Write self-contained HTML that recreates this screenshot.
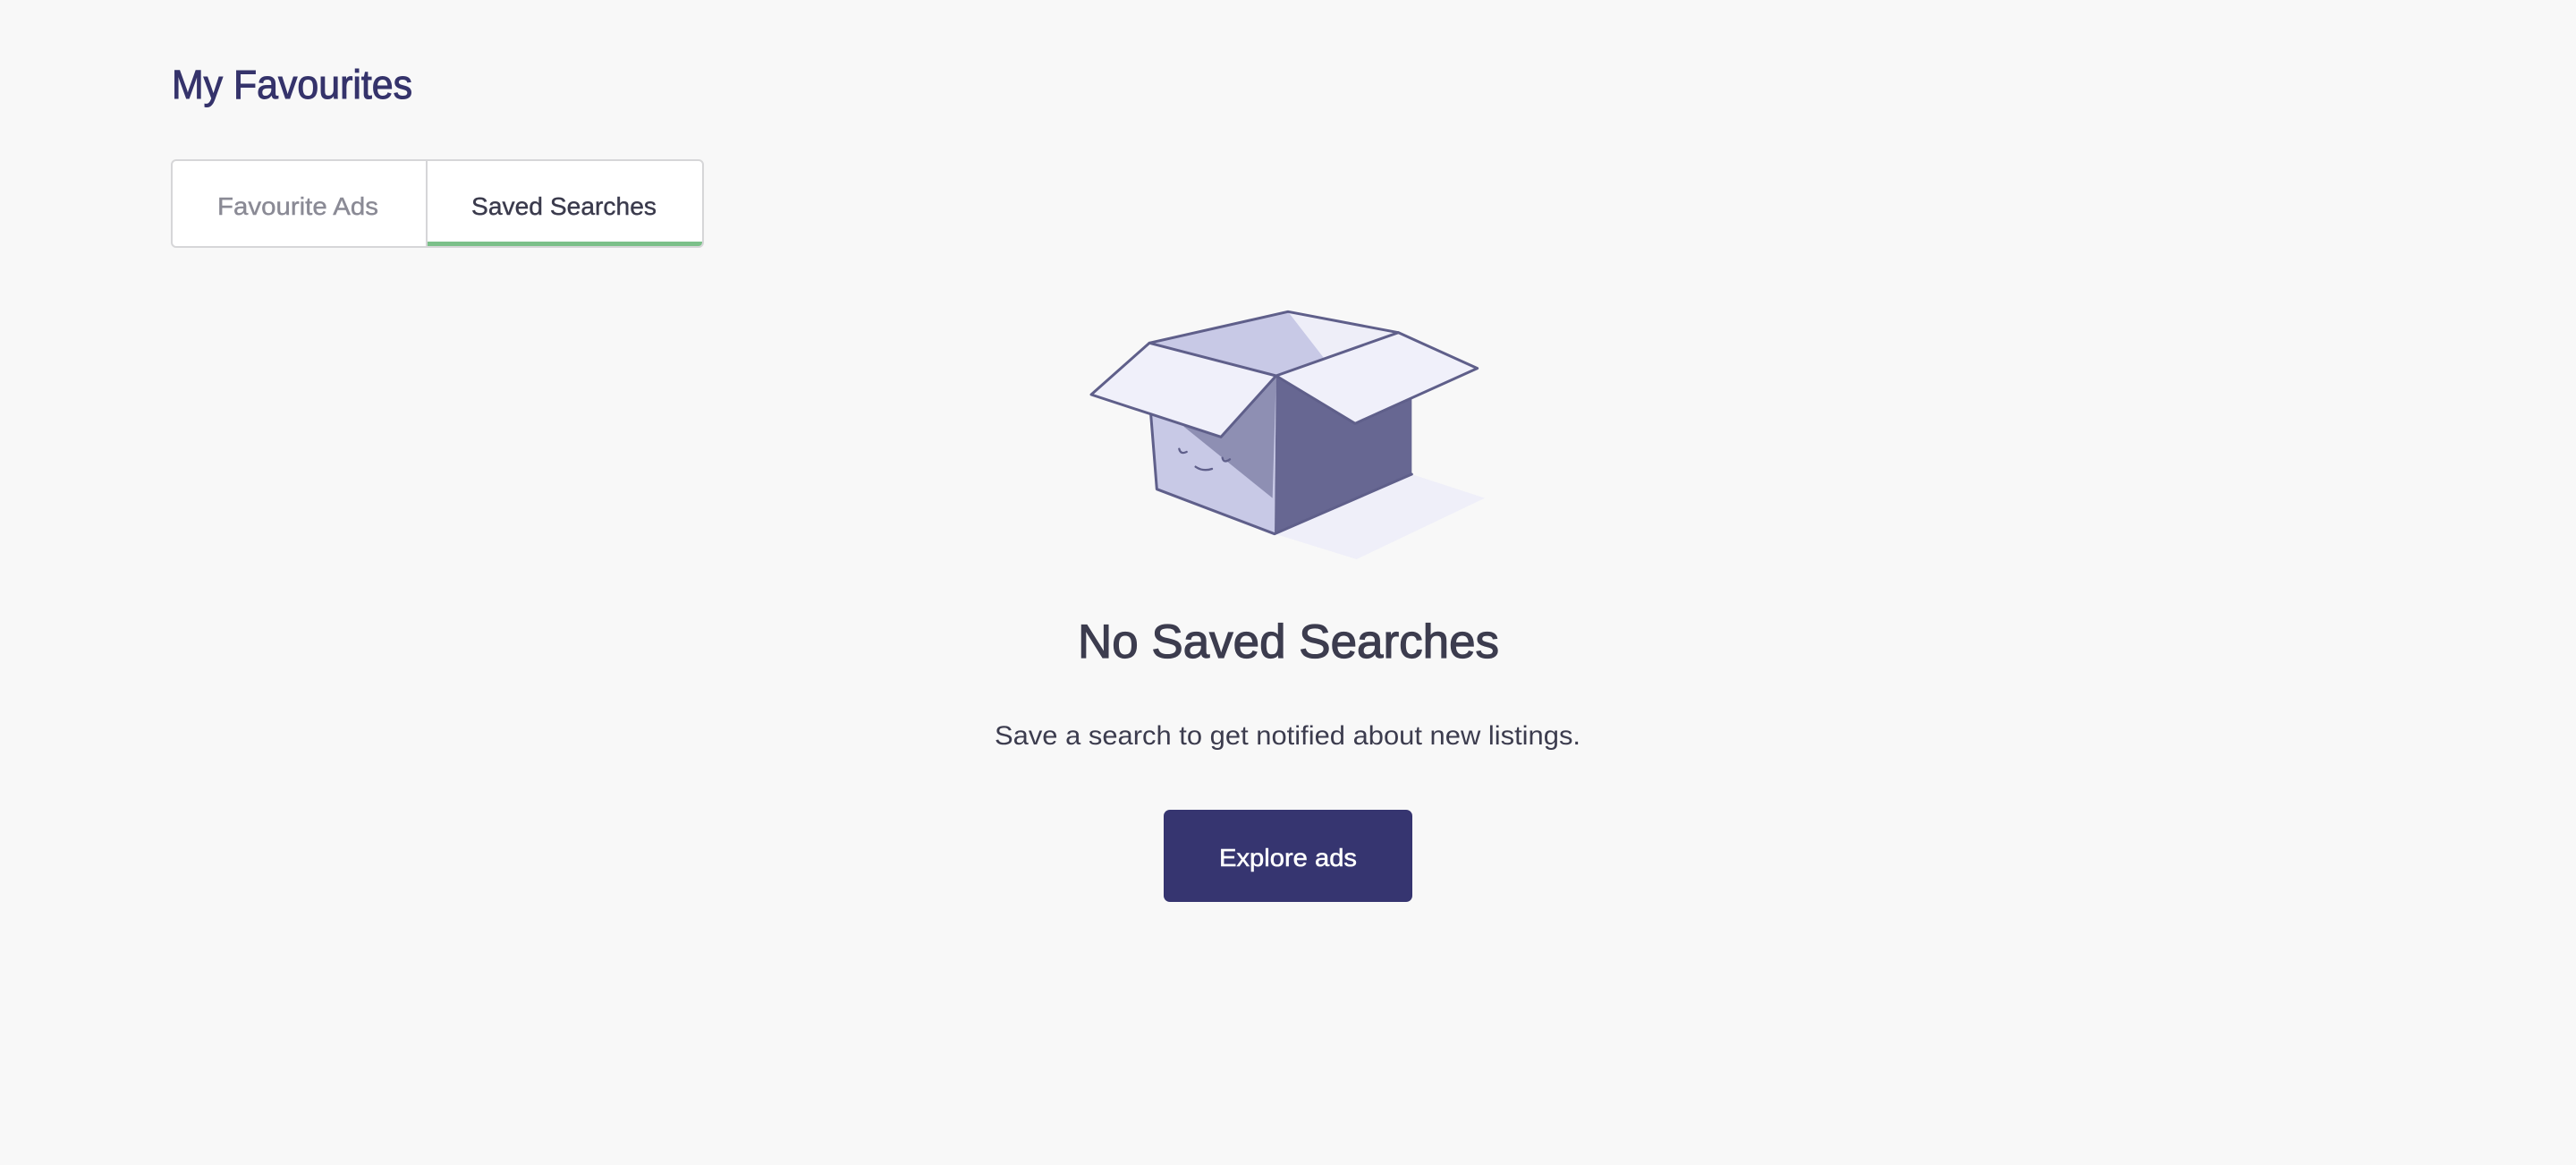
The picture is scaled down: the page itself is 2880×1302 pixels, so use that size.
<!DOCTYPE html>
<html><head><meta charset="utf-8"><style>
html,body{margin:0;padding:0;background:#f8f8f8;width:2880px;height:1302px;overflow:hidden;font-family:"Liberation Sans",sans-serif}
.tabs{position:absolute;left:191px;top:178px;width:596px;height:99px;background:#fff;border:2px solid #d6d6d8;border-radius:6px;box-sizing:border-box;overflow:hidden}
.div{position:absolute;left:283px;top:0;width:2px;height:100%;background:#d6d6d8}
.green{position:absolute;left:285px;right:0;bottom:0;height:5px;background:#7cc08a}
.btn{position:absolute;left:1301px;top:905px;width:278px;height:103px;background:#363570;border-radius:7px}
svg{position:absolute}
</style></head><body>
<div class="tabs"><div class="div"></div><div class="green"></div></div>
<div class="btn"></div>
<svg style="left:1180px;top:330px" width="500" height="320" viewBox="0 0 1500 960">
 <g stroke-linejoin="round" stroke-linecap="round">
  <polygon points="735,800 1195,600 1440,680 1010,885" fill="#efeff9"/>
  <polygon points="315,160 780,55 1150,125 740,270" fill="#c8c9e6"/>
  <polygon points="780,55 1150,125 900,210" fill="#eeeef8"/>
  <polygon points="320,400 740,275 735,800 340,650" fill="#c8c9e6"/>
  <polygon points="430,440 740,275 728,680" fill="#8e8fb3"/>
  <polygon points="740,275 1195,330 1195,600 735,800" fill="#676792"/>
  <path d="M320,400 L340,650 L735,800 L1195,600" fill="none" stroke="#5f5f8a" stroke-width="9"/>
  <polyline points="315,160 780,55 1150,125" fill="none" stroke="#5f5f8a" stroke-width="9"/>
  <polygon points="315,160 740,270 555,475 120,333" fill="#f0f0fa" stroke="#5f5f8a" stroke-width="9"/>
  <polygon points="740,270 1150,125 1415,245 1005,430" fill="#f0f0fa" stroke="#5f5f8a" stroke-width="9"/>
  <path d="M415,515 Q420,535 440,525 M560,545 Q565,565 585,550 M470,575 Q495,592 525,582" fill="none" stroke="#5f5f8a" stroke-width="7"/>
 </g>
</svg>
<svg style="left:0;top:0" width="2880" height="1302">
 <text x="192" y="110" font-size="45" fill="#35336b" stroke="#35336b" stroke-width="1" textLength="269" lengthAdjust="spacingAndGlyphs">My Favourites</text>
 <text x="243" y="240" font-size="28" fill="#8a8a95" stroke="#8a8a95" stroke-width="0.4" textLength="180" lengthAdjust="spacingAndGlyphs">Favourite Ads</text>
 <text x="527" y="240" font-size="28" fill="#3a3a4c" stroke="#3a3a4c" stroke-width="0.4" textLength="207" lengthAdjust="spacingAndGlyphs">Saved Searches</text>
 <text x="1205" y="735" font-size="53" fill="#3c3c4e" stroke="#3c3c4e" stroke-width="1.2" textLength="471" lengthAdjust="spacingAndGlyphs">No Saved Searches</text>
 <text x="1112" y="832" font-size="30" fill="#3c3c4e" textLength="655" lengthAdjust="spacingAndGlyphs">Save a search to get notified about new listings.</text>
 <text x="1363" y="968" font-size="28" fill="#ffffff" stroke="#ffffff" stroke-width="0.5" textLength="154" lengthAdjust="spacingAndGlyphs">Explore ads</text>
</svg>
</body></html>
